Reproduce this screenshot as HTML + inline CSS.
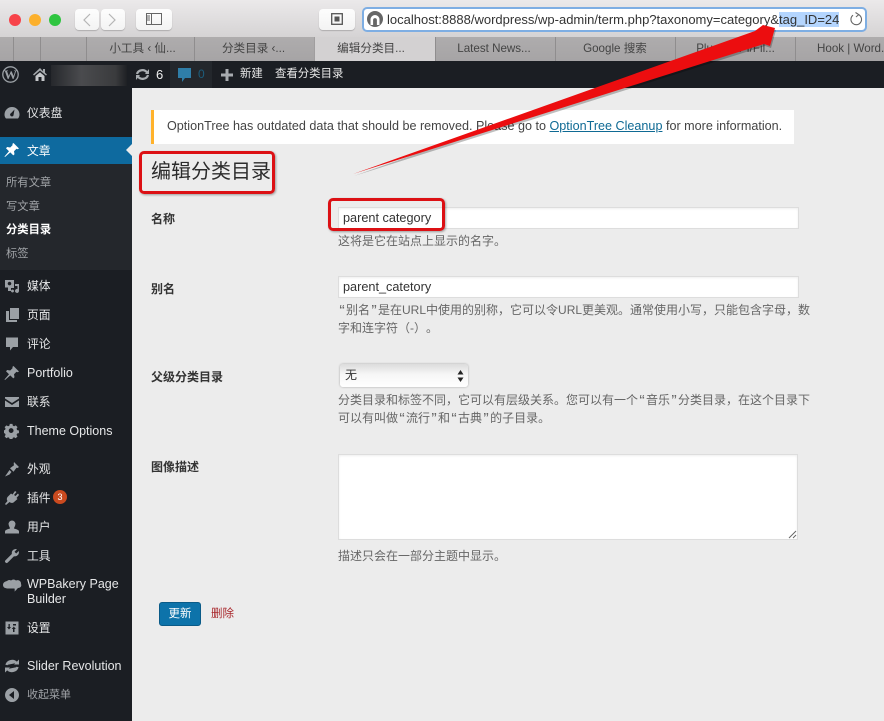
<!DOCTYPE html>
<html><head><meta charset="utf-8">
<style>
html,body{margin:0;padding:0}
body{width:884px;height:721px;overflow:hidden;position:relative;background:#ececec;font-family:"Liberation Sans","Noto Sans CJK SC",sans-serif;font-size:13px;color:#444;text-spacing-trim:space-all}
#w{position:absolute;left:0;top:0;width:884px;height:721px;overflow:hidden;filter:blur(.3px)}
.a{position:absolute;white-space:nowrap}
#bar{left:0;top:0;width:884px;height:37px;background:linear-gradient(#ebe9ea,#d5d3d4)}
.btn{position:absolute;top:9px;height:21px;background:linear-gradient(#fdfdfd,#f3f3f3);border-radius:4px;box-shadow:0 1px 1px rgba(0,0,0,.2)}
.dot{position:absolute;top:14px;width:12px;height:12px;border-radius:50%}
#tabs{left:0;top:37px;width:884px;height:24px;background:linear-gradient(#aeacad,#a6a4a5)}
.tab{position:absolute;top:0;height:24px;line-height:24px;text-align:center;color:#444;font-size:11.6px;border-left:1px solid #8f8d8e;box-sizing:border-box}
#ab{left:0;top:61px;width:884px;height:27px;background:#1b1e23;color:#e8e8e8;font-size:11.4px}
#side{left:0;top:88px;width:132px;height:633px;background:#1b1e23}
.m{position:absolute;left:27px;color:#e6e7e8;font-size:12.5px;line-height:16px;white-space:nowrap}
.c{font-size:11.8px}
.s{position:absolute;left:6px;color:#a0a3a7;font-size:11.3px;line-height:16px}
.ic{position:absolute;left:4px;width:16px;height:16px;fill:#9ba0a5}
.lbl{position:absolute;left:151px;font-size:12px;font-weight:bold;color:#333;white-space:nowrap}
.d{position:absolute;left:338px;font-size:12px;color:#666;line-height:18px;white-space:nowrap}
.q{display:inline-block;width:8px;text-align:center;font-size:16px;line-height:12px;position:relative;top:2px}
.inp{position:absolute;background:#fff;border:1px solid #ddd;box-sizing:border-box;box-shadow:inset 0 1px 2px rgba(0,0,0,.07);color:#333}
</style></head><body>
<div id="w">

<div class="a" id="bar">
  <div class="dot" style="left:9px;background:#f7434a"></div>
  <div class="dot" style="left:29px;background:#fcb02c"></div>
  <div class="dot" style="left:49px;background:#2fc540"></div>
  <div class="btn" style="left:75px;width:24px"></div>
  <div class="btn" style="left:101px;width:24px"></div>
  <svg class="a" style="left:75px;top:9px" width="50" height="21" fill="none" stroke="#b5b5b5" stroke-width="1.2"><path d="M15 5l-6 6 6 6M34 5l6 6-6 6"/></svg>
  <div class="btn" style="left:136px;width:36px"></div>
  <svg class="a" style="left:146px;top:13px" width="16" height="13" fill="none" stroke="#666" stroke-width="1"><rect x=".5" y=".5" width="15" height="11"/><path d="M5.500 .5v11M1 3h3M1 5h3M1 7h3"/></svg>
  <div class="btn" style="left:319px;width:36px"></div>
  <svg class="a" style="left:331px;top:13px" width="12" height="13"><rect x=".7" y=".7" width="10.600" height="10.600" fill="none" stroke="#555" stroke-width="1.300"/><rect x="3.500" y="3.500" width="5" height="5" fill="#555"/></svg>
  <div class="a" style="left:362px;top:7px;width:505px;height:25px;box-sizing:border-box;background:#fff;border:2px solid #7eaee3;border-radius:5px"></div>
  <svg class="a" style="left:367px;top:11px" width="16" height="16"><circle cx="8" cy="8" r="8" fill="#666"/><path d="M3.500 14V8.500a4.500 4.500 0 0 1 9 0V14h-2.600V9a1.900 1.900 0 0 0-3.800 0v5z" fill="#fff"/></svg>
  <div class="a" style="left:387px;top:11px;width:452px;height:17px;overflow:hidden;font-size:13px;line-height:17px;color:#333">localhost:8888/wordpress/wp-admin/term.php?taxonomy=category&amp;<span style="background:#b4d5fe">tag_ID=248</span></div>
  <svg class="a" style="left:849px;top:12px" width="15" height="15" fill="none" stroke="#666" stroke-width="1.100"><path d="M9.500 2.600A5.300 5.300 0 1 1 4 3.200"/><path d="M6.500 .5L9.700 2.600 7 5"/></svg>
</div>

<div class="a" id="tabs">
  <div class="tab" style="left:13px;width:27px"></div>
  <div class="tab" style="left:40px;width:46px"></div>
  <div class="tab" style="left:86px;width:108px;padding-left:4px">小工具 ‹ 仙...</div>
  <div class="tab" style="left:194px;width:120px;padding-right:2px">分类目录 ‹...</div>
  <div class="tab" style="left:314px;width:121px;background:#d3d1d2;border-left:1px solid #a09e9f;padding-right:8px">编辑分类目...</div>
  <div class="tab" style="left:435px;width:120px;padding-right:3px">Latest News...</div>
  <div class="tab" style="left:555px;width:119px">Google 搜索</div>
  <div class="tab" style="left:675px;width:120px">Plugin API/Fil...</div>
  <div class="tab" style="left:795px;width:110px;text-align:left;padding-left:21px">Hook | Word...</div>
</div>

<div class="a" id="ab">
  <svg class="a" style="left:2px;top:5px" width="17" height="17"><circle cx="8.500" cy="8.500" r="7.700" fill="none" stroke="#9ba0a5" stroke-width="1.300"/><text x="8.500" y="13" text-anchor="middle" font-family="Liberation Serif" font-weight="bold" font-size="13" fill="#9ba0a5">W</text></svg>
  <svg class="a" style="left:33px;top:6px" width="15" height="15"><path d="M7 1L0 7.500l1 1L7 3.500l6 5 1-1-2-1.800V2h-2v2.300z" fill="#a4a8ac"/><path d="M2.500 9L7 5.200 11.500 9v5H8.500V10h-3v4h-3z" fill="#c4c7ca"/></svg>
  <div class="a" style="left:51px;top:4px;width:76px;height:21px;background:linear-gradient(90deg,#26282c,#4a4b4e 40%,#3a3b3d 85%,#1e2024)"></div>
  <svg class="a" style="left:135px;top:7px" width="15" height="13" fill="none" stroke="#a8acb0" stroke-width="2.200"><path d="M2 6a5.500 5 0 0 1 10-1.500M13 7a5.500 5 0 0 1-10 1.500"/><path d="M14 1v5h-4zM1 12V7h4z" fill="#a8acb0" stroke="none"/></svg>
  <div class="a" style="left:156px;top:6px;font-size:13px;line-height:15px;color:#eee">6</div>
  <div class="a" style="left:170px;top:0;width:42px;height:27px;background:#23272c"></div>
  <svg class="a" style="left:178px;top:7px" width="13" height="15" fill="#2f7ea8"><path d="M0 0h13v10H7l-3 4v-4H0z"/></svg>
  <div class="a" style="left:198px;top:6px;font-size:12px;line-height:15px;color:#1c5d7c">0</div>
  <svg class="a" style="left:221px;top:8px" width="12" height="12" fill="#a8acb0"><path d="M4.500 0h3v4.500H12v3H7.500V12h-3V7.500H0v-3h4.500z"/></svg>
  <div class="a" style="left:240px;top:6px;line-height:15px">新建</div>
  <div class="a" style="left:275px;top:6px;line-height:15px">查看分类目录</div>
</div>

<div class="a" id="side">
  <div class="a" style="left:0;top:49px;width:132px;height:27px;background:#0e6a9f"></div>
  <svg class="a" style="left:126px;top:56px" width="6" height="12"><path d="M6 0L0 6l6 6z" fill="#ececec"/></svg>
  <div class="a" style="left:0;top:76px;width:132px;height:106px;background:#24272c"></div>

  <svg class="ic" style="top:17px" viewBox="0 0 16 16"><path d="M8 2a7.500 7.500 0 0 0-7.500 7.500c0 1.800.6 3 1.500 4h12c.9-1 1.500-2.200 1.500-4A7.500 7.500 0 0 0 8 2zm0 9.500a1.800 1.800 0 0 1-.9-3.400L10.500 4.500 9.600 9.800A1.800 1.800 0 0 1 8 11.500z" fill-rule="evenodd"/></svg>
  <div class="m c" style="top:17px">仪表盘</div>

  <svg class="ic" style="top:54px;fill:#fff" viewBox="0 0 16 16"><path d="M9.500 1l5.500 5.500-1.500.7-1-.5-2.500 2.500.5 3-1.200 1.200-3-3L1 15l-.5-.5 4.500-5.300-3-3L3.200 5l3 .5 2.500-2.500-.4-1z"/></svg>
  <div class="m c" style="top:55px;color:#fff">文章</div>

  <div class="s" style="top:87px">所有文章</div>
  <div class="s" style="top:111px">写文章</div>
  <div class="s" style="top:134px;color:#fff;font-weight:bold">分类目录</div>
  <div class="s" style="top:158px">标签</div>

  <svg class="ic" style="top:190px" viewBox="0 0 16 16"><path d="M1 2h9v8H7v3H4V9.500H1zM5.500 3.800a1.800 1.800 0 1 0 .01 0zM11 6h4v7a2 2 0 1 1-1.500-2V8H11zM8.500 11.500a1.500 1.500 0 1 1-.01 0z" fill-rule="evenodd"/></svg>
  <div class="m c" style="top:190px">媒体</div>

  <svg class="ic" style="top:219px" viewBox="0 0 16 16"><path d="M6 1h9v11H6zM2 4h3v9h8v2H2z"/></svg>
  <div class="m c" style="top:219px">页面</div>

  <svg class="ic" style="top:248px" viewBox="0 0 16 16"><path d="M2 1.500h12v9.500H9l-3 3.500V11H2z"/></svg>
  <div class="m c" style="top:248px">评论</div>

  <svg class="ic" style="top:277px" viewBox="0 0 16 16"><path d="M9.500 1l5.500 5.500-1.500.7-1-.5-2.500 2.500.5 3-1.200 1.200-3-3L1 15l-.5-.5 4.500-5.300-3-3L3.200 5l3 .5 2.500-2.500-.4-1z"/></svg>
  <div class="m" style="top:277px">Portfolio</div>

  <svg class="ic" style="top:306px" viewBox="0 0 16 16"><path d="M1 3h14v1.500L8 9 1 4.500zM1 6.500L8 11l7-4.500V13H1z"/></svg>
  <div class="m c" style="top:306px">联系</div>

  <svg class="ic" style="top:335px" viewBox="0 0 16 16"><path d="M6.500 1h3l.4 2 1.500.7 1.800-1.100 2 2.100-1.100 1.700.7 1.600 2 .4v3l-2 .4-.7 1.500 1.100 1.800-2.100 2-1.800-1.100-1.500.7-.4 2h-3l-.4-2-1.500-.7-1.800 1.100-2-2.100 1.100-1.700-.7-1.600-2-.4v-3l2-.4.700-1.500-1.100-1.800 2.100-2 1.800 1.100 1.500-.7zM8 5.800a2.700 2.700 0 1 0 .01 0z" transform="scale(.89)" fill-rule="evenodd"/></svg>
  <div class="m" style="top:335px">Theme Options</div>

  <svg class="ic" style="top:373px" viewBox="0 0 16 16"><path d="M10 1l5 5-1.500 1-1-.3-3 4-3.500-3.500 4-3-.3-1.500zM5.500 9l2 2-2 2.500L1 15.500z"/></svg>
  <div class="m c" style="top:373px">外观</div>

  <svg class="ic" style="top:402px" viewBox="0 0 16 16"><path d="M11 1l1.500 1-2.500 3 1.500 1L14 3.500l1 1.500-2.500 3 1 1-4 3.500c-1.500.8-3 .4-4-.5L2 15l-1-1 2.500-3c-.8-1-1-2.500 0-4L7 3.500l1.500 1z"/></svg>
  <div class="m c" style="top:402px">插件</div>
  <div class="a" style="left:53px;top:402px;width:14px;height:14px;border-radius:50%;background:#ca4a1f;color:#fff;font-size:9px;line-height:14px;text-align:center">3</div>

  <svg class="ic" style="top:431px" viewBox="0 0 16 16"><path d="M8 1.500a3.500 3.500 0 0 1 3.300 4.500C11 7.500 10 8.500 10 9.500c2 .7 5 1.200 5 3V14.500H1V12.500c0-1.800 3-2.300 5-3 0-1-1-2-1.300-3.500A3.500 3.500 0 0 1 8 1.500z"/></svg>
  <div class="m c" style="top:431px">用户</div>

  <svg class="ic" style="top:460px" viewBox="0 0 16 16"><path d="M11.500 1a3.800 3.800 0 0 1 1.500.3L10.500 3.800l1.700 1.700 2.500-2.500A4 4 0 0 1 10 8.200L3.800 14.500a1.500 1.500 0 0 1-2.300-2.300L7.800 6A4 4 0 0 1 11.500 1z"/></svg>
  <div class="m c" style="top:460px">工具</div>

  <svg class="ic" style="top:490px;left:3px;width:19px" viewBox="0 0 19 16"><path d="M4 3a3.500 3.500 0 0 1 4-.5 4 4 0 0 1 5 0 3.500 3.500 0 0 1 5 3.500c1 2-.5 4-3 4-1 1-2.500 3-3.500 3.500.3-1 .3-2 0-3H5c-2.500 0-5-1-5-3.500S2 3.500 4 3z"/></svg>
  <div class="m" style="top:489px;line-height:15px">WPBakery Page<br>Builder</div>

  <svg class="ic" style="top:532px" viewBox="0 0 16 16"><path d="M1.500 1.500h13v13h-13zM4.500 4v3H3l2 2.500L7 7H5.800V4zM9 12V9H7.800l2-2.500 2 2.500H10.500v3zM12 4H9v1.500h3z" fill-rule="evenodd"/></svg>
  <div class="m c" style="top:532px">设置</div>

  <svg class="ic" style="top:570px" viewBox="0 0 16 16" fill="none" stroke="#9ba0a5" stroke-width="2.300"><path d="M2.500 7a5.700 5.300 0 0 1 10-2M13.500 9a5.700 5.300 0 0 1-10 2"/><path d="M15 1.500v5h-5zM1 14.500v-5h5z" stroke="none" fill="#9ba0a5"/></svg>
  <div class="m" style="top:570px">Slider Revolution</div>

  <svg class="ic" style="top:599px" viewBox="0 0 16 16"><path d="M8 1a7 7 0 1 0 .01 0zM10 4v8L5 8z" fill-rule="evenodd"/></svg>
  <div class="m" style="top:599px;color:#a0a3a7;font-size:11px">收起菜单</div>
</div>

<!-- notice -->
<div class="a" style="left:151px;top:110px;width:643px;height:34px;background:#fff;border-left:3px solid #ffb22b;box-sizing:border-box;font-size:12.6px;line-height:33px;padding-left:13px;color:#444">OptionTree has outdated data that should be removed. Please go to <span style="color:#0f6a94;text-decoration:underline">OptionTree Cleanup</span> for more information.</div>

<!-- heading -->
<div class="a" style="left:151px;top:157px;font-size:20px;line-height:30px;color:#2c2c2c">编辑分类目录</div>
<div class="a" style="left:139px;top:151px;width:136px;height:43px;box-sizing:border-box;border:3.500px solid #dc1014;border-radius:5px;box-shadow:1px 1px 2px rgba(0,0,0,.35)"></div>

<!-- form -->
<div class="lbl" style="top:210px">名称</div>
<div class="inp" style="left:338px;top:207px;width:461px;height:22px;font-size:12.700px;line-height:20px;padding-left:4px">parent category</div>
<div class="a" style="left:328px;top:198px;width:117px;height:33px;box-sizing:border-box;border:3.500px solid #dc1014;border-radius:5px;box-shadow:1px 1px 2px rgba(0,0,0,.35)"></div>
<div class="d" style="top:232px">这将是它在站点上显示的名字。</div>

<div class="lbl" style="top:280px">别名</div>
<div class="inp" style="left:338px;top:276px;width:461px;height:22px;font-size:12.700px;line-height:20px;padding-left:4px">parent_catetory</div>
<div class="d" style="top:301px"><span class="q">“</span>别名<span class="q">”</span>是在URL中使用的别称，它可以令URL更美观。通常使用小写，只能包含字母，数<br>字和连字符（-）。</div>

<div class="lbl" style="top:368px">父级分类目录</div>
<div class="a" style="left:340px;top:364px;width:128px;height:23px;border-radius:3px;background:linear-gradient(#dcdcdc,#f6f6f6 45%,#fff);box-shadow:0 0 2px rgba(0,0,0,.3);font-size:12px;line-height:23px;color:#333;text-indent:5px">无</div>
<svg class="a" style="left:457px;top:370px" width="7" height="12" fill="#222"><path d="M3.500 0L6.500 4.500H.5zM3.500 12L.5 7.500h6z"/></svg>
<div class="d" style="top:391px">分类目录和标签不同，它可以有层级关系。您可以有一个<span class="q">“</span>音乐<span class="q">”</span>分类目录，在这个目录下<br>可以有叫做<span class="q">“</span>流行<span class="q">”</span>和<span class="q">“</span>古典<span class="q">”</span>的子目录。</div>

<div class="lbl" style="top:458px">图像描述</div>
<div class="inp" style="left:338px;top:454px;width:460px;height:86px"></div>
<svg class="a" style="left:788px;top:530px" width="9" height="9" fill="none" stroke="#666" stroke-width="1"><path d="M1 8l7-7M5 8l3-3"/></svg>
<div class="d" style="top:547px">描述只会在一部分主题中显示。</div>

<div class="a" style="left:159px;top:602px;width:42px;height:24px;border-radius:3px;background:#0d73aa;border:1px solid #0a5b88;box-sizing:border-box;color:#fff;font-size:11.500px;line-height:22px;text-align:center">更新</div>
<div class="a" style="left:211px;top:606px;font-size:11.500px;line-height:16px;color:#a8252a">删除</div>

<!-- arrow -->
<svg class="a" style="left:0;top:0" width="884" height="721">
  <path d="M353 174L755 31 763 25 775 28 770 46 764 44z" fill="#000" opacity=".25" transform="translate(1 2)"/>
  <path d="M353 174L755 31 763 25 775 28 770 46 764 44z" fill="#ec0d0f"/>
</svg>
</div>
</body></html>
